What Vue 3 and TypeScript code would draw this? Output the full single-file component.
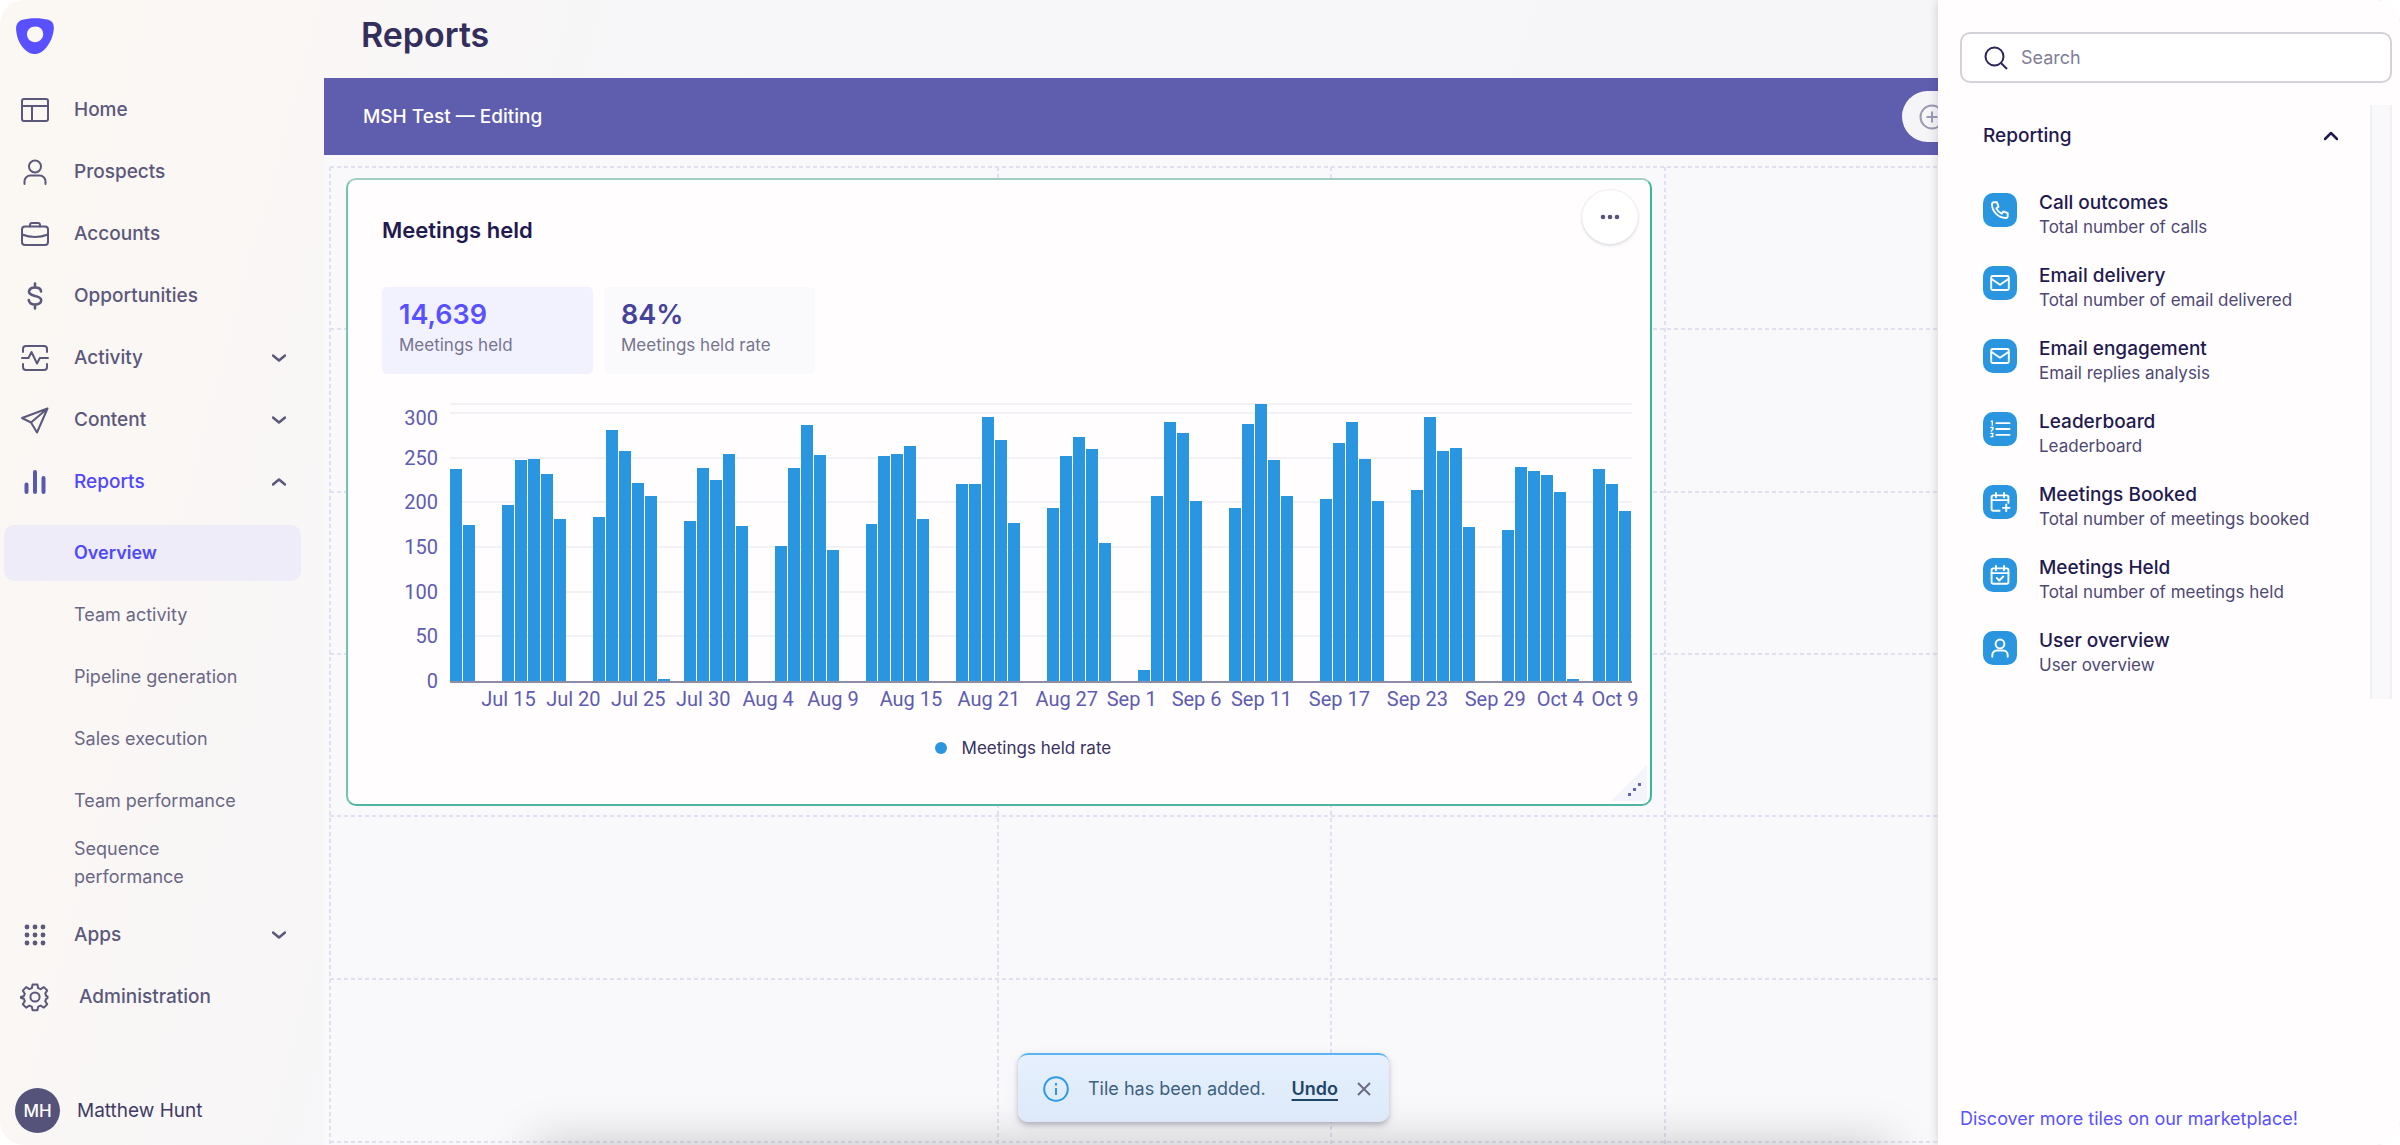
<script setup lang="ts">
interface NavItem { label: string; icon: string; chevron?: 'down' | 'up'; active?: boolean }
interface TileType { title: string; text: string; icon: string }

const navItems: NavItem[] = [
  { label: 'Home', icon: 'home' },
  { label: 'Prospects', icon: 'user' },
  { label: 'Accounts', icon: 'briefcase' },
  { label: 'Opportunities', icon: 'dollar' },
  { label: 'Activity', icon: 'activity', chevron: 'down' },
  { label: 'Content', icon: 'send', chevron: 'down' },
  { label: 'Reports', icon: 'bars', chevron: 'up', active: true },
]
const reportPages = ['Overview', 'Team activity', 'Pipeline generation', 'Sales execution', 'Team performance', 'Sequence performance']
const bottomItems: NavItem[] = [
  { label: 'Apps', icon: 'apps', chevron: 'down' },
  { label: 'Administration', icon: 'gear' },
]

const tileTypes: TileType[] = [
  { title: 'Call outcomes', text: 'Total number of calls', icon: 'phone' },
  { title: 'Email delivery', text: 'Total number of email delivered', icon: 'mail' },
  { title: 'Email engagement', text: 'Email replies analysis', icon: 'mail' },
  { title: 'Leaderboard', text: 'Leaderboard', icon: 'list' },
  { title: 'Meetings Booked', text: 'Total number of meetings booked', icon: 'calendar-plus' },
  { title: 'Meetings Held', text: 'Total number of meetings held', icon: 'calendar-check' },
  { title: 'User overview', text: 'User overview', icon: 'user' },
]

// Daily values, July 11 to October 9
const days: number[] = [
  237, 175, 0, 0, 197, 247, 248, 232, 181, 0, 0,
  184, 281, 257, 222, 207, 2, 0, 179, 238, 225, 254, 173, 0, 0,
  151, 238, 286, 253, 147, 0, 0, 176, 252, 254, 263, 181, 0, 0,
  220, 221, 295, 270, 177, 0, 0, 194, 252, 273, 260, 154, 0, 0, 12,
  207, 290, 278, 201, 0, 0, 194, 288, 310, 247, 207, 0, 0, 204, 266, 290, 248, 201, 0, 0,
  214, 295, 257, 261, 172, 0, 0, 169, 239, 235, 230, 212, 2, 0, 237, 221, 190,
]
const peak = 310
const ticks = [0, 50, 100, 150, 200, 250, 300]
const lines = [50, 100, 150, 200, 250, 300, 310]
const dayLabels: Record<number, string> = {
  4: 'Jul 15', 9: 'Jul 20', 14: 'Jul 25', 19: 'Jul 30', 24: 'Aug 4', 29: 'Aug 9', 35: 'Aug 15', 41: 'Aug 21', 47: 'Aug 27',
  52: 'Sep 1', 57: 'Sep 6', 62: 'Sep 11', 68: 'Sep 17', 74: 'Sep 23', 80: 'Sep 29', 85: 'Oct 4', 90: 'Oct 9',
}
const percent = (v: number): string => `${(v / peak) * 100}%`

const gridColumns = [6, 674, 1007, 1341]
const gridRows = [12, 174, 337, 499, 661, 824, 987]

const icons: Record<string, string> = {
  home: '<rect x="2" y="4" width="26" height="22" rx="2"/><path d="M2 11h26M12 11v15"/>',
  user: '<circle cx="15" cy="9.5" r="6"/><path d="M4.500 27v-2.500a6 6 0 0 1 6-6h9a6 6 0 0 1 6 6V27"/>',
  briefcase: '<rect x="2" y="7.500" width="26" height="18.500" rx="3"/><path d="M10 7.500V6a2 2 0 0 1 2-2h6a2 2 0 0 1 2 2v1.500M2 15.500q13 5 26 0"/>',
  dollar: '<path d="M15 2.500v4M15 23.500v4M21 10.500c0-2.500-2.500-4-6-4s-6 1.600-6 4.300c0 5.700 12.200 2.600 12.200 8.400 0 2.700-2.700 4.300-6.200 4.300s-6.200-1.600-6.200-4.400" stroke-width="2.600"/>',
  activity: '<path d="M3 9V6a3 3 0 0 1 3-3h18a3 3 0 0 1 3 3v3M3 21v3a3 3 0 0 0 3 3h18a3 3 0 0 0 3-3v-3M2 15h6.500l3-6 5.500 11.500 2.800-5.500H28"/>',
  send: '<path d="M27.500 3.500L2 13l9 4.500 6 10zM27.500 3.500L11 17.500"/>',
  bars: '<path d="M6.500 17.500V25M15 5v20M23.500 11v14" stroke-width="4"/>',
  gear: '<circle cx="15" cy="15" r="4.600"/><path d="M12.600 2.500h4.800l.8 3.700 2.400 1 3.300-2.100 3.300 3.300-2 3.200 1 2.400 1.300.4v1.900l-1.300.4-1 2.400 2 3.200-3.300 3.300-3.300-2-2.400 1-.8 3.700h-4.800l-.8-3.700-2.400-1-3.300 2-3.300-3.300 2-3.200-1-2.400-2.800-.6v-1.300l2.800-.6 1-2.400-2-3.200L6.100 5.100l3.300 2.100 2.400-1z"/>',
  phone: '<path d="M6.500 4.500h4.300l2.200 6-3 2.200a15 15 0 0 0 7.300 7.300l2.200-3 6 2.200v4.300a2.500 2.500 0 0 1-2.500 2.500C12.500 25.500 4.500 17.500 4 7a2.500 2.500 0 0 1 2.500-2.500z"/>',
  mail: '<rect x="3" y="5.500" width="24" height="19" rx="2"/><path d="M3.500 9.500L15 17.500l11.500-8"/>',
  list: '<path d="M10 7h18M10 15h18M10 23h18"/><path d="M3 4.500l1.500-.5v6M2.500 13h3v2l-2.500 3M2.500 21h3l-1 2 1 2.500h-3" stroke-width="1.800"/>',
  'calendar-plus': '<path d="M14.500 27H6a2.500 2.500 0 0 1-2.500-2.500v-16A2.500 2.500 0 0 1 6 6h18a2.500 2.500 0 0 1 2.500 2.500V16M3.500 12.500h23M9.500 2.500v6M20.500 2.500v6M23.500 18.500v9M19 23h9"/>',
  'calendar-check': '<rect x="3.500" y="6" width="23" height="21" rx="2.500"/><path d="M3.500 12.500h23M9.500 2.500v6M20.500 2.500v6M10.500 19l3.500 3.500 5.500-5.500"/>',
}
const appDots = [5, 15, 25]
</script>

<template>
  <div class="app">
    <aside class="sidebar">
      <a href="#" class="logo" aria-label="Start page">
        <svg viewBox="0 0 38 36" width="38" height="36">
          <path fill="#5951ff" fill-rule="evenodd" d="M6.500 1.800C13-.3 25-.3 32.500 1.800c4 1.200 5.700 4.500 5.300 9.200-.8 9.500-6 19-12.800 23.200-4.300 2.600-9 2.400-13.200-.3C5 29.600.6 20.500.1 11.500-.1 6.300 2 3.200 6.500 1.800zM19.500 8.500c-5 0-8.500 3.200-8.500 7.800s3.500 7.900 8 7.900 8.200-3.500 8.200-8.100-3.200-7.600-7.700-7.600z" />
        </svg>
      </a>
      <nav class="nav">
        <a v-for="item in navItems" :key="item.label" href="#" class="nav-row" :class="{ active: item.active }">
          <svg class="icon" viewBox="0 0 30 30" v-html="icons[item.icon]" />
          <span class="nav-label">{{ item.label }}</span>
          <svg v-if="item.chevron" class="chevron" viewBox="0 0 14 14">
            <path :d="item.chevron === 'down' ? 'M1 4.500l6 5 6-5' : 'M1 9.500l6-5 6 5'" />
          </svg>
        </a>
        <div class="sub-nav">
          <a v-for="(page, i) in reportPages" :key="page" href="#" class="sub-row" :class="{ current: i === 0 }">{{ page }}</a>
        </div>
        <a v-for="item in bottomItems" :key="item.label" href="#" class="nav-row" :class="item.icon">
          <svg v-if="item.icon === 'apps'" class="icon dots" viewBox="0 0 30 30">
            <template v-for="y in appDots" :key="y">
              <circle v-for="x in appDots" :key="x" :cx="x" :cy="y" r="3" />
            </template>
          </svg>
          <svg v-else class="icon" viewBox="0 0 30 30" v-html="icons[item.icon]" />
          <span class="nav-label">{{ item.label }}</span>
          <svg v-if="item.chevron" class="chevron" viewBox="0 0 14 14"><path d="M1 4.500l6 5 6-5" /></svg>
        </a>
      </nav>
      <div class="account">
        <span class="avatar">MH</span>
        <span>Matthew Hunt</span>
      </div>
    </aside>

    <main class="main">
      <header class="page-head"><h1>Reports</h1></header>
      <div class="banner">
        <h2>MSH Test — Editing</h2>
        <button type="button" class="add" aria-label="Add tile">
          <svg viewBox="0 0 26 26" width="26" height="26"><circle cx="13" cy="13" r="11.500" /><path d="M13 7.500v11M7.500 13h11" /></svg>
        </button>
      </div>
      <section class="board">
        <svg class="guides" aria-hidden="true">
          <line v-for="y in gridRows" :key="'r' + y" x1="6" :y1="y" x2="100%" :y2="y" />
          <line v-for="x in gridColumns" :key="'c' + x" :x1="x" y1="12" :x2="x" y2="100%" />
        </svg>

        <article class="tile">
          <header class="tile-head">
            <h3>Meetings held</h3>
            <button type="button" class="more" aria-label="Tile menu">
              <svg viewBox="0 0 20 6" width="20" height="6"><circle cx="3" cy="3" r="2.300" /><circle cx="10" cy="3" r="2.300" /><circle cx="17" cy="3" r="2.300" /></svg>
            </button>
          </header>
          <div class="stats">
            <button type="button" class="stat selected"><strong>14,639</strong><span>Meetings held</span></button>
            <button type="button" class="stat"><strong>84%</strong><span>Meetings held rate</span></button>
          </div>
          <div class="chart">
            <div class="y-axis">
              <span v-for="t in ticks" :key="t" :style="{ bottom: `min(${percent(t)}, 100% - 14px)` }">{{ t }}</span>
            </div>
            <div class="plot">
              <i v-for="l in lines" :key="l" class="line" :style="{ bottom: percent(l) }" />
              <div v-for="(d, i) in days" :key="i" class="slot"><div class="bar" :style="{ height: percent(d) }" /></div>
            </div>
            <div class="x-axis">
              <div v-for="(_, i) in days" :key="i"><span>{{ dayLabels[i] }}</span></div>
            </div>
          </div>
          <div class="legend"><i />Meetings held rate</div>
          <svg class="resize" viewBox="0 0 36 36" width="36" height="36">
            <path d="M0 36L36 0v36z" fill="#f4f4fc" />
            <path d="M17 28h3v3h-3zM22 23h3v3h-3zM27 18h3v3h-3z" fill="#6765b0" />
          </svg>
        </article>
      </section>
      <div class="glow" />
      <div class="toast" role="status">
        <svg class="info" viewBox="0 0 26 26" width="26" height="26"><circle cx="13" cy="13" r="11.800" /><path d="M13 12v7M13 7v2.500" /></svg>
        <span>Tile has been added.</span>
        <button type="button" class="undo">Undo</button>
        <button type="button" class="close" aria-label="Dismiss"><svg viewBox="0 0 14 14" width="14" height="14"><path d="M1 1l12 12M13 1L1 13" /></svg></button>
      </div>
    </main>

    <aside class="drawer">
      <label class="search">
        <svg viewBox="0 0 24 24" width="24" height="24"><circle cx="10.500" cy="10.500" r="9" /><path d="M17 17l6 6" /></svg>
        <input type="search" placeholder="Search" aria-label="Search">
      </label>
      <div class="catalog">
        <div class="catalog-main">
          <button type="button" class="group">
            <span>Reporting</span>
            <svg class="chevron" viewBox="0 0 14 14"><path d="M1 10l6-6 6 6" /></svg>
          </button>
          <ul>
            <li v-for="t in tileTypes" :key="t.title">
              <span class="badge"><svg viewBox="0 0 30 30" v-html="icons[t.icon]" /></span>
              <div><h4>{{ t.title }}</h4><p>{{ t.text }}</p></div>
            </li>
          </ul>
        </div>
        <div class="track" />
      </div>
      <a href="#" class="discover">Discover more tiles on our marketplace!</a>
    </aside>
  </div>
</template>

<style>
body { background: #fff; }
</style>

<style scoped>
* { box-sizing: border-box; }
h1, h2, h3, h4, p, ul { margin: 0; padding: 0; font-weight: inherit; }
a { color: inherit; text-decoration: none; }
button { border: 0; padding: 0; background: none; font: inherit; color: inherit; cursor: pointer; }
svg { fill: none; flex: none; }

.app {
  display: flex;
  position: relative;
  min-height: 100vh;
  overflow: hidden;
  border-radius: 24px;
  background: linear-gradient(105deg, #fbf7f3 0, #fbf7f3 4%, #f7f6f8 24%, #f6f6f9 100%);
  font-family: Inter, "Liberation Sans", sans-serif;
  font-size: 18px;
  line-height: 28px;
  color: #1f1a4f;
}

.sidebar { display: flex; flex-direction: column; width: 324px; flex: none; padding: 18px 23px 12px 4px; color: #5b587b; }
.logo { display: block; height: 61px; padding-left: 12px; }
.nav { display: flex; flex-direction: column; flex: 1; }
.nav-row { display: flex; align-items: center; height: 62px; padding: 0 16px; font-size: 19px; font-weight: 500; }
.icon { width: 30px; height: 30px; stroke: currentColor; stroke-width: 2; stroke-linecap: round; stroke-linejoin: round; }
.icon.dots { fill: currentColor; stroke: none; width: 24px; height: 24px; margin: 0 3px; }
.nav-label { flex: 1; padding-left: 24px; }
.chevron { width: 14px; height: 14px; stroke: currentColor; stroke-width: 2.500; stroke-linecap: round; stroke-linejoin: round; }
.nav-row .chevron { margin-right: -1px; }
.nav-row.active .nav-label { color: #5048fb; }
.nav-row.active .icon { color: #5a57ac; }
.nav-row.gear .nav-label { padding-left: 29px; }
.sub-nav { display: flex; flex-direction: column; gap: 6px; padding: 12px 0 13px; color: #6a6886; }
.sub-row { display: flex; align-items: center; height: 56px; padding: 0 80px 0 70px; border-radius: 10px; white-space: nowrap; }
.sub-row:last-child { white-space: normal; }
.sub-row.current { background: #eeecf9; color: #5048fb; font-weight: 600; }
.account { display: flex; align-items: center; gap: 17px; padding-left: 11px; font-size: 19px; color: #3f3b66; }
.avatar { display: grid; place-items: center; width: 45px; height: 45px; border-radius: 50%; background: #56537b; color: #fff; font-size: 17px; font-weight: 500; }

.main { display: flex; flex-direction: column; flex: 1; min-width: 0; position: relative; }
.page-head { display: flex; align-items: center; height: 78px; padding: 0 0 8px 37px; }
.page-head h1 { font-size: 34px; line-height: 40px; font-weight: 600; color: #332e5c; }
.banner { display: flex; align-items: center; justify-content: space-between; height: 77px; padding: 0 438px 0 39px; background: #5e5dae; overflow: hidden; }
.banner h2 { font-size: 19px; font-weight: 500; color: #fff; }
.add { width: 100px; height: 51px; margin-right: -40px; padding-left: 17px; border-radius: 26px; background: #f5f5f8; display: flex; align-items: center; }
.add svg { stroke: #9b99b3; stroke-width: 2; }

.board { position: relative; flex: 1; background: #f9f9fb; padding: 23px 22px; }
.guides { position: absolute; inset: 0; width: 100%; height: 100%; stroke: #e2e0f0; stroke-width: 2; stroke-dasharray: 4 3; }
.tile { position: relative; width: calc(65% - 15px); min-width: 1200px; height: 628px; border: 2px solid; border-color: #a3cfc2 #35b99d #4fb5a0 #72c3b1; border-radius: 10px; background: #fffdfe; padding: 10px 18px 0 34px; }
.tile-head { display: flex; justify-content: space-between; height: 97px; }
.tile-head h3 { padding-top: 26px; font-size: 22px; font-weight: 600; }
.more { display: grid; place-items: center; width: 56px; height: 54px; margin-right: -6px; border-radius: 50%; background: #fff; box-shadow: 0 0 2px #d5d5dc, 0 2px 3px #e3e3e8; }
.more svg { fill: #56537b; }
.stats { display: flex; gap: 11px; }
.stat { display: flex; flex-direction: column; width: 211px; height: 87px; padding: 11px 17px; border-radius: 5px; background: #fafafc; text-align: left; color: #76748f; font-size: 17px; }
.stat strong { font-size: 27px; line-height: 33px; font-weight: 600; color: #46429a; }
.stat.selected { background: #f2f2fe; }
.stat.selected strong { color: #5951ff; }

.chart { display: grid; grid-template-columns: 56px 1fr; grid-template-rows: 277px 36px; column-gap: 12px; margin-top: 30px; color: #5e5cae; font-family: Roboto, "Liberation Sans", sans-serif; font-size: 20px; }
.y-axis { position: relative; }
.y-axis span { position: absolute; right: 0; line-height: 28px; margin-bottom: -14px; }
.plot { position: relative; display: flex; border-bottom: 2px solid #8f8da6; height: 279px; }
.line { position: absolute; left: 0; right: 0; height: 2px; margin-bottom: -1px; background: #f1f1f6; }
.slot { position: relative; flex: 1 1 0; display: flex; align-items: flex-end; padding-right: 1px; }
.bar { width: 100%; background: #2b96e0; }
.x-axis { grid-column: 2; display: flex; padding-top: 4px; }
.x-axis div { flex: 1 1 0; width: 0; display: flex; justify-content: center; white-space: nowrap; }
.x-axis div:last-child { justify-content: flex-end; }
.x-axis div:last-child span { margin-right: -7px; }
.legend { display: flex; align-items: center; justify-content: center; gap: 15px; margin-top: 17px; padding-left: 32px; font-size: 17px; color: #37325f; }
.legend i { width: 12px; height: 12px; border-radius: 50%; background: #2b96e0; }
.resize { position: absolute; right: 3px; bottom: 3px; }

.glow { position: absolute; left: 210px; right: 510px; bottom: -80px; height: 80px; box-shadow: 0 0 50px rgba(0, 0, 0, .22); }
.toast { position: absolute; bottom: 23px; left: 694px; display: flex; align-items: center; width: 371px; height: 69px; padding: 0 18px 0 25px; border-radius: 10px; border-top: 2px solid #5db4f0; background: linear-gradient(#e6f0fe, #dde9f9); box-shadow: 0 3px 5px rgba(60, 55, 90, .3), 0 4px 16px rgba(60, 55, 90, .06); color: #3d6180; }
.info { stroke: #2b9ae6; stroke-width: 2; margin-right: 19px; }
.undo { margin-left: auto; font-weight: 600; color: #1f4668; text-decoration: underline; text-decoration-thickness: 2px; text-underline-offset: 4px; }
.close { display: flex; margin-left: 19px; }
.close svg { stroke: #6c6a85; stroke-width: 2; }

.drawer { position: absolute; top: 0; right: 0; bottom: 0; width: 462px; display: flex; flex-direction: column; padding: 32px 8px 12px 22px; background: #fffdfe; box-shadow: 0 0 10px rgba(40, 36, 70, .2); }
.search { display: flex; align-items: center; gap: 13px; height: 51px; padding: 0 22px; border: 2px solid #d2d2d8; border-radius: 10px; background: #fff; }
.search svg { stroke: #2a2558; stroke-width: 2; }
.search input { flex: 1; min-width: 0; border: 0; padding: 0; outline: 0; background: none; font: inherit; color: inherit; }
.search input::placeholder { color: #7f7d96; opacity: 1; }
.catalog { display: flex; margin-top: 22px; height: 594px; }
.catalog-main { flex: 1; padding: 17px 32px 0 23px; }
.group { display: flex; justify-content: space-between; align-items: center; width: 100%; font-size: 19px; font-weight: 500; }
.catalog ul { list-style: none; margin-top: 35px; }
.catalog li { display: flex; gap: 22px; height: 73px; white-space: nowrap; padding-top: 8px; }
.badge { display: grid; place-items: center; width: 34px; height: 34px; border-radius: 10px; background: #2b96e0; }
.badge svg { width: 22px; height: 22px; stroke: #fff; stroke-width: 2.600; stroke-linecap: round; stroke-linejoin: round; }
.catalog h4 { font-size: 19px; font-weight: 500; line-height: 25px; margin-top: -3px; }
.catalog p { font-size: 17px; line-height: 25px; color: #4d4974; }
.track { width: 22px; background: #f9f9fc; border: solid #f1f1f3; border-width: 0 2px; }
.discover { margin-top: auto; color: #5951ff; }
</style>
